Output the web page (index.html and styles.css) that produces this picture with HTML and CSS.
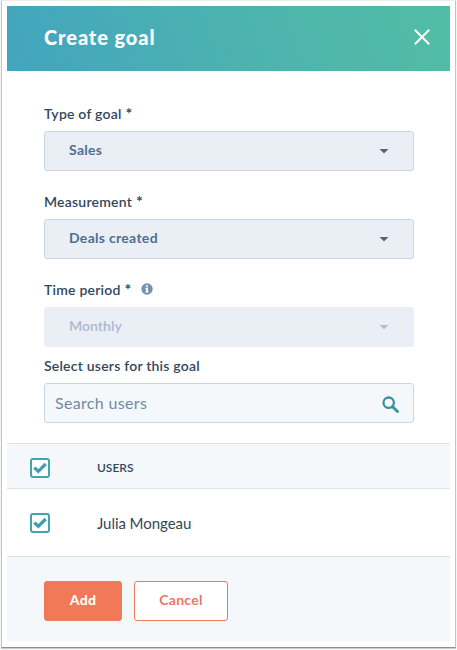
FILE: index.html
```
<!DOCTYPE html>
<html lang="en">

<head>
    <meta charset="utf-8">
    <title>Create goal</title>
    <link rel="stylesheet" href="styles.css">
</head>

<body>
    <div class="frame">
        <div class="panel">
            <header class="header">
                <h1 class="title">Create goal</h1>
                <button class="close" type="button" aria-label="Close">
                    <svg width="18" height="18" viewBox="0 0 18 18">
                        <path d="M1.8 1.8 L16.2 16.2 M16.2 1.8 L1.8 16.2" fill="none" stroke="#fff" stroke-width="2" />
                    </svg>
                </button>
            </header>

            <form class="form">
                <div class="label">Type of goal <span class="star">*</span></div>
                <div class="select">
                    <span class="value">Sales</span>
                    <span class="caret"></span>
                </div>

                <div class="label">Measurement <span class="star">*</span></div>
                <div class="select">
                    <span class="value">Deals created</span>
                    <span class="caret"></span>
                </div>

                <div class="label">
                    Time period <span class="star">*</span>
                    <svg class="info" width="12" height="12" viewBox="0 0 12 12">
                        <circle cx="6" cy="6" r="5.7" fill="#7391b3" />
                        <path d="M5 2.2h2v1.6H5z M4.3 4.8H7v3.6h.8v1.2H4.2V8.4H5V6h-.7z" fill="#fff" />
                    </svg>
                </div>
                <div class="select disabled">
                    <span class="value">Monthly</span>
                    <span class="caret"></span>
                </div>

                <div class="label users-label">Select users for this goal</div>
                <div class="search">
                    <span class="placeholder">Search users</span>
                    <svg width="17" height="17" viewBox="0 0 17 17">
                        <circle cx="6.7" cy="6.7" r="5.2" fill="none" stroke="#3a929f" stroke-width="2.3" />
                        <path d="M10.4 10.4 L15.5 15.5" fill="none" stroke="#3a929f" stroke-width="2.8" stroke-linecap="round" />
                    </svg>
                </div>
            </form>

            <div class="row head">
                <span class="checkbox">
                    <svg width="14" height="12" viewBox="0 0 14 12">
                        <path d="M1.3 5.6 L5.3 9.3 L12.7 2" fill="none" stroke="#3f9fae" stroke-width="3.3" />
                    </svg>
                </span>
                <span class="column">USERS</span>
            </div>
            <div class="row">
                <span class="checkbox">
                    <svg width="14" height="12" viewBox="0 0 14 12">
                        <path d="M1.3 5.6 L5.3 9.3 L12.7 2" fill="none" stroke="#3f9fae" stroke-width="3.3" />
                    </svg>
                </span>
                <span class="name">Julia Mongeau</span>
            </div>

            <footer class="footer">
                <button class="button add" type="button">Add</button>
                <button class="button cancel" type="button">Cancel</button>
            </footer>
        </div>
    </div>
</body>

</html>
```
FILE: styles.css
```
* {
    margin: 0;
    padding: 0;
    box-sizing: border-box;
}

body {
    height: 650px;
    padding: 0 1px 2px;
    background-color: #fdfdfd;
    color: #33475b;
    font-family: Lato, sans-serif;
    font-size: 14px;
    overflow: hidden;
}

.frame {
    height: 648px;
    padding: 5px 5px 0;
    border: 1px solid #c4c4c4;
    border-top-color: #ededed;
    border-bottom-color: #8e8e8e;
    background-color: #fff;
    box-shadow: 0 1px 1px #ccc;
}

.panel {
    width: 443px;
}

.header {
    display: flex;
    align-items: center;
    justify-content: space-between;
    height: 65px;
    padding: 0 19px 4px 37px;
    background: linear-gradient(70deg, #42a5bf, #4db5ad 60%, #52bda5);
}

.title {
    color: #fff;
    font-size: 20px;
    font-weight: 900;
    letter-spacing: .9px;
}

.close {
    height: 18px;
    border: none;
    background: none;
}

.close svg {
    display: block;
}

.form {
    height: 372px;
    padding: 31px 36px 0 37px;
}

.label {
    display: flex;
    align-items: center;
    height: 22px;
    margin-bottom: 7px;
    font-weight: 600;
    letter-spacing: .22px;
}

.star {
    margin-left: 4px;
    font-size: 16px;
    font-weight: 700;
    line-height: 18px;
}

.info {
    margin: 0 0 0 9px;
}

.select {
    display: flex;
    align-items: center;
    justify-content: space-between;
    height: 40px;
    margin-bottom: 19px;
    padding: 0 24px;
    border: 1px solid #cbd6e2;
    border-radius: 3px;
    background-color: #eaeff6;
    color: #506e91;
    font-weight: 700;
    letter-spacing: .3px;
}

.value {
    padding-bottom: 3px;
}

.caret {
    width: 10px;
    height: 5px;
    background-color: #56667a;
    clip-path: polygon(0 0, 100% 0, 50% 100%);
}

.disabled {
    margin-bottom: 7px;
    border-color: #eaeff4;
    color: #b2bdd5;
    letter-spacing: 0;
}

.disabled .caret {
    background-color: #b4bdcb;
}

.search {
    display: flex;
    align-items: center;
    justify-content: space-between;
    height: 40px;
    padding: 2px 14px 0 10px;
    border: 1px solid #cbd6e2;
    border-radius: 3px;
    background-color: #f5f8fb;
    color: #7188a4;
    font-size: 16px;
    letter-spacing: .33px;
}

.placeholder {
    padding-bottom: 3px;
}

.row {
    display: flex;
    align-items: center;
    height: 68px;
    padding-left: 23px;
    border-bottom: 1px solid #dfe3eb;
}

.head {
    height: 46px;
    padding-top: 4px;
    border-top: 1px solid #dfe3eb;
    background-color: #f5f8fa;
    font-size: 12px;
    font-weight: 600;
}

.column {
    padding-bottom: 2px;
}

.checkbox {
    display: flex;
    align-items: center;
    justify-content: center;
    width: 20px;
    height: 20px;
    margin-right: 47px;
    border: 2px solid #45a3b1;
    border-radius: 3px;
    background-color: #fff;
}

.name {
    font-size: 15px;
    letter-spacing: -.05px;
}

.footer {
    display: flex;
    gap: 12px;
    height: 84px;
    padding: 24px 37px 0;
    background-color: #f5f8fa;
}

.button {
    height: 40px;
    padding-bottom: 3px;
    border: 1px solid #ef7959;
    border-radius: 3px;
    font: 700 14px Lato, sans-serif;
    letter-spacing: .3px;
}

.add {
    width: 78px;
    background-color: #f17957;
    color: #fff;
    font-weight: 900;
}

.cancel {
    width: 94px;
    background-color: #fff;
    color: #e9785c;
}
```
